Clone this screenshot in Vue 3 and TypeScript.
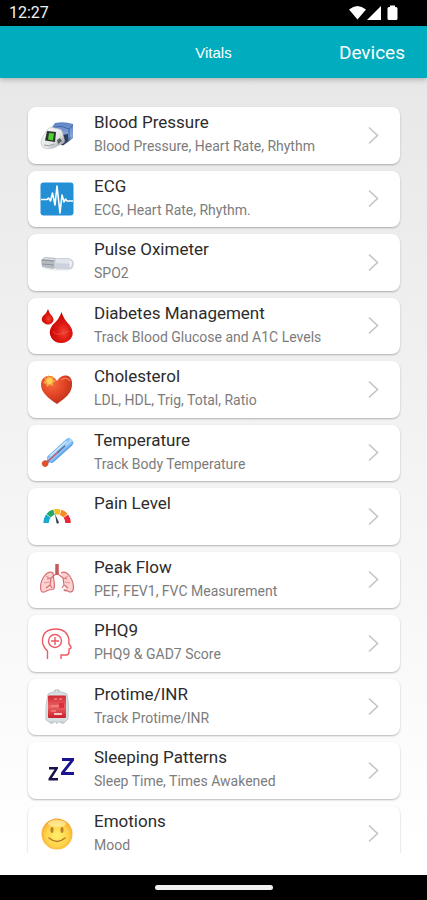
<script setup lang="ts">
interface Vital {
  icon: string
  title: string
  detail: string
}

const vitals: Vital[] = [
  { icon: 'pressure', title: 'Blood Pressure', detail: 'Blood Pressure, Heart Rate, Rhythm' },
  { icon: 'ecg', title: 'ECG', detail: 'ECG, Heart Rate, Rhythm.' },
  { icon: 'oximeter', title: 'Pulse Oximeter', detail: 'SPO2' },
  { icon: 'drops', title: 'Diabetes Management', detail: 'Track Blood Glucose and A1C Levels' },
  { icon: 'heart', title: 'Cholesterol', detail: 'LDL, HDL, Trig, Total, Ratio' },
  { icon: 'thermometer', title: 'Temperature', detail: 'Track Body Temperature' },
  { icon: 'gauge', title: 'Pain Level', detail: '' },
  { icon: 'lungs', title: 'Peak Flow', detail: 'PEF, FEV1, FVC Measurement' },
  { icon: 'head', title: 'PHQ9', detail: 'PHQ9 & GAD7 Score' },
  { icon: 'bag', title: 'Protime/INR', detail: 'Track Protime/INR' },
  { icon: 'sleep', title: 'Sleeping Patterns', detail: 'Sleep Time, Times Awakened' },
  { icon: 'smile', title: 'Emotions', detail: 'Mood' },
]
</script>

<template>
  <div class="screen">
    <div class="status">
      <span class="clock">12:27</span>
      <svg class="signals" width="50" height="16" viewBox="0 0 50 16" fill="#fff" aria-hidden="true">
        <path d="M0 4.6Q8.500-2.500 17 4.600L8.500 14.500Z" />
        <path d="M32 1V15H18Z" />
        <path d="M41 2V.5h5V2h1q1.500 0 1.500 1.500v10q0 1.500-1.500 1.500h-7q-1.500 0-1.500-1.500v-10Q38.500 2 40 2Z" />
      </svg>
    </div>

    <header class="bar">
      <h1 class="heading">Vitals</h1>
      <a class="devices" href="#devices">Devices</a>
    </header>

    <main class="body">
      <ul class="list">
        <li v-for="v in vitals" :key="v.title" class="row">
          <a class="card" href="#vital">
            <svg class="icon" width="36" height="36" viewBox="0 0 36 36" fill="none" aria-hidden="true">
              <defs>
                <linearGradient id="cuff" x1="0" y1="0" x2="0" y2="1"><stop stop-color="#5f83c4" /><stop offset=".6" stop-color="#88a6d8" /><stop offset="1" stop-color="#263858" /></linearGradient>
                <linearGradient id="shell" x1="0" y1="0" x2="1" y2="1"><stop stop-color="#fff" /><stop offset=".6" stop-color="#e3e4e6" /><stop offset="1" stop-color="#777b82" /></linearGradient>
                <radialGradient id="drop" cx=".6" cy=".65" r=".6"><stop stop-color="#f04436" /><stop offset=".5" stop-color="#de1710" /><stop offset="1" stop-color="#c50906" /></radialGradient>
                <radialGradient id="heart" cx=".35" cy=".3" r=".75"><stop stop-color="#f8683f" /><stop offset=".55" stop-color="#e04425" /><stop offset="1" stop-color="#b82e1b" /></radialGradient>
                <linearGradient id="glass" x1="0" y1="0" x2="0" y2="1"><stop stop-color="#64aef3" /><stop offset=".45" stop-color="#b4dafa" /><stop offset="1" stop-color="#4f9ce9" /></linearGradient>
                <linearGradient id="blood" x1="0" y1="0" x2="0" y2="1"><stop stop-color="#cf2935" /><stop offset=".5" stop-color="#ea6262" /><stop offset="1" stop-color="#c91e2a" /></linearGradient>
                <radialGradient id="face" cx=".5" cy=".55" r=".55"><stop stop-color="#fff06a" /><stop offset=".65" stop-color="#fed34a" /><stop offset="1" stop-color="#f7a531" /></radialGradient>
              </defs>

              <template v-if="v.icon === 'pressure'">
                <path d="M13 9l3-4q9-2 18 1v14l-5 4-5 3.500-8-3z" fill="url(#cuff)" />
                <path d="M15 9q8-2 15 2l4-4M30 11v12" stroke="#3f65aa" />
                <path d="M22 17l7-1v7l-6 4z" fill="#2e3d5c" />
                <path d="M3 20l5-8q2-3 5-2.500l7 1.500q3 .5 3.500 4l2 8q0 2-3 3l-8 4q-8 2-11-1-3-4-.5-9z" fill="url(#shell)" stroke="#c3c5c8" stroke-width=".7" />
                <path d="M8 13l9 1-1 10-10-1.500z" fill="#29342d" />
                <path d="M10 15l5 .5-1 7-5-1z" fill="#54cf35" />
                <path d="M18 22l3-2 2 3-4 3z" fill="#5b5f66" />
                <path d="M5 27q5 2 10-1" stroke="#9b9da0" />
              </template>

              <template v-else-if="v.icon === 'ecg'">
                <rect x="1.500" y="1.500" width="33" height="33" rx="3" fill="#2390d5" />
                <path d="M2 18.500h6l1.500-1.500 2 3 2-8 2.500 12 2-19 3 27 2-18 2 7 1.500-3 1.500 2H34" stroke="#fff" stroke-width="1.600" stroke-linejoin="round" />
              </template>

              <template v-else-if="v.icon === 'oximeter'">
                <path d="M2 15l4-3 11 1v10l-3 1-11-2z" fill="#b5bac0" />
                <path d="M3 15l12 1M3 19l12 1" stroke="#8d949b" />
                <path d="M5 13.500l10 1" stroke="#e6e9ec" />
                <path d="M16 13h14q5 2 5 6-1 5-4 5.500H18q-3-1-3-5t1-6.500z" fill="#ced1dc" />
                <path d="M17 14h13q3 2 3.500 5l-17-1z" fill="#e2e4ec" />
                <path d="M31 16q2 3 0 6" stroke="#f7f8fb" stroke-width="1.500" />
                <path d="M4 23l11 2h15" stroke="#e4e6ea" />
              </template>

              <template v-else-if="v.icon === 'drops'">
                <path d="M9 1q1 4 4 7 3 4 0 7-4 3-8 0-4-3-1-7 4-3 5-7z" fill="url(#drop)" />
                <path d="M22.500 4q2 7 8 13 6 8 1 14-4 4-9 4-7 0-10-5-4-6 1-13 7-6 9-13z" fill="url(#drop)" />
                <path d="M14 23q2 4 7 3t9-3" stroke="#f36c55" opacity=".5" />
              </template>

              <template v-else-if="v.icon === 'heart'">
                <path d="M18 32Q2 22 2 13C2 3 13 1 18 9c5-8 15-7 15 2 1 10-8 16-15 21z" fill="url(#heart)" />
                <path d="M22 8q6-4 9 1" stroke="#ff8b62" stroke-width="1.500" opacity=".7" />
                <path d="M9 3l2 2 3-1v3l3 2-3 2v3l-3-1-3 2-1-3-3-1 2-3-1-3 3 1z" fill="#f5a23b" />
                <circle cx="10.500" cy="9" r="3" fill="#ffce5c" />
              </template>

              <template v-else-if="v.icon === 'thermometer'">
                <g transform="rotate(-42 18 18)">
                  <rect x="6" y="14" width="32" height="8.500" rx="4" fill="url(#glass)" />
                  <path d="M1 16.500h6V20H1q-2-1.500 0-3.500z" fill="#6aaae6" />
                  <path d="M2 18h19" stroke="#b9526c" stroke-width="1.500" />
                  <path d="M19 18h10" stroke="#61749e" stroke-width="1.500" />
                  <path d="M11 15.500h22" stroke="#d9effd" stroke-width="1.200" />
                  <circle cx="2" cy="18" r="3.200" fill="#e1502e" />
                </g>
              </template>

              <g v-else-if="v.icon === 'gauge'" stroke-width="5.500">
                <path d="M7 24A11 11 0 0 1 9.300 17" stroke="#18a9cf" />
                <path d="M9.600 16.600A11 11 0 0 1 15 13.200" stroke="#22a765" />
                <path d="M15.600 13A11 11 0 0 1 21 13.200" stroke="#f7bc22" />
                <path d="M21.600 13.400A11 11 0 0 1 26.500 16.600" stroke="#f78b20" />
                <path d="M26.900 17.200A11 11 0 0 1 29 24" stroke="#ee2538" />
                <path d="M16 15l4 8.500q-1 2-2.500.500z" fill="#344452" stroke="none" />
              </g>

              <g v-else-if="v.icon === 'lungs'" stroke="#d46f73" stroke-width="1.200" stroke-linejoin="round">
                <path d="M14 11C8 7 2 17 1.500 25q0 7 5 4.500 3-2 7-2 2-.5 2-4z" fill="#fbd2d1" />
                <path d="M22 11c6-4 12 6 12.500 14 0 7-5 4.500-5 4.500-3-2-7-2-2-.5-2-4z" fill="#fbd2d1" />
                <path d="M18 2v11" stroke="#c9585d" stroke-width="3.500" />
                <path d="M17 12l-5 4-4 1m4-1-1 7-4 3m4-3 2 3M19 12l5 4 4 1m-4-1 1 7 4 3m-4-3-2 3" />
                <path d="M7 14l3 2M5 21l5-1M29 14l-3 2m5 5-5-1" stroke="#e89495" />
              </g>

              <g v-else-if="v.icon === 'head'" stroke="#ed5964" stroke-width="1.400" stroke-linejoin="round">
                <path d="M8.500 33v-8Q3 20 3.500 14C4 6 10 3 17 3c8 0 12 5 13 11 0 2-.5 3 0 4l2 3q.5 1.500-2 2v3q0 3-3 3h-5v4" />
                <circle cx="16" cy="15" r="6.500" />
                <path d="M16 11v8M12 15h8" />
              </g>

              <template v-else-if="v.icon === 'bag'">
                <path d="M16 4V1h4v3M11 32v2h3v-2M22 32v2h3v-2M18 32v3" stroke="#a9b1b5" />
                <path d="M9 5l5-2h9l5 2q2 8 1 25l-3 3H10l-3-2Q6 16 9 5z" fill="#d7dfe2" stroke="#bfc9cd" />
                <rect x="9" y="6.500" width="18" height="22.500" rx="1" fill="url(#blood)" />
                <path d="M15 10h3m2 0h3M12 17h9M12 22h5" stroke="#f7a09c" />
                <path d="M20 14h5v5h-5z" fill="#da3039" />
                <path d="M15 25h8" stroke="#fac4c1" stroke-width="2" />
              </template>

              <template v-else-if="v.icon === 'sleep'">
                <path d="M10 14h9v1.500L13 25h6v2.500H9.500v-2l6-9H10z" fill="#171349" />
                <path d="M23 5h12v2.500L26 19h9v3H22v-2.500L31 8h-8z" fill="#1a148f" />
              </template>

              <template v-else>
                <circle cx="18" cy="18" r="15.500" fill="url(#face)" />
                <ellipse cx="18" cy="7.500" rx="9" ry="3.500" fill="#fff3b0" opacity=".65" />
                <ellipse cx="13" cy="14" rx="1.500" ry="3" fill="#b9802a" />
                <ellipse cx="23" cy="14" rx="1.500" ry="3" fill="#b9802a" />
                <path d="M10 22q8 7 16 0" stroke="#b9782a" stroke-width="1.500" stroke-linecap="round" />
              </template>
            </svg>

            <span class="text">
              <span class="title">{{ v.title }}</span>
              <span v-if="v.detail" class="detail">{{ v.detail }}</span>
            </span>

            <svg class="chevron" width="12" height="20" viewBox="0 0 12 20" fill="none" aria-hidden="true">
              <path d="M2 1.500L10.500 9.500L2 17.500" stroke="#c4c4c4" stroke-width="1.600" />
            </svg>
          </a>
        </li>
      </ul>
    </main>

    <footer class="nav"><span class="handle"></span></footer>
  </div>
</template>

<style>
body {
  margin: 0;
}
</style>

<style scoped>
.screen {
  display: flex;
  flex-direction: column;
  height: 100vh;
  overflow: hidden;
  background: #fff;
  font-family: Roboto, "Liberation Sans", sans-serif;
}

.status {
  display: flex;
  flex: none;
  align-items: center;
  justify-content: space-between;
  height: 26px;
  padding: 0 28px 0 9px;
  background: #000;
  color: #f2f2f2;
}

.clock {
  font-size: 16px;
  line-height: 26px;
}

.bar {
  position: relative;
  z-index: 1;
  display: grid;
  flex: none;
  grid-template-columns: 1fr auto 1fr;
  align-items: center;
  height: 52px;
  padding: 0 22px;
  background: #00acbe;
  box-shadow: 0 1px 6px rgba(0, 0, 0, 0.3);
  color: #fff;
}

.heading {
  grid-column: 2;
  margin: 0;
  font-family: "Liberation Sans", Arial, sans-serif;
  font-size: 15px;
  font-weight: 400;
}

.devices {
  justify-self: end;
  color: inherit;
  font-size: 19px;
  text-decoration: none;
}

.body {
  flex: 1;
  min-height: 0;
  padding: 29px 27px 0 28px;
  overflow: hidden;
  border-bottom: 22px solid #fff;
  background: linear-gradient(#e8e8e8, #fff);
}

.list {
  display: grid;
  grid-auto-rows: 57px 56px;
  gap: 7px;
  margin: 0;
  padding: 0;
  list-style: none;
}

.card {
  display: flex;
  box-sizing: border-box;
  height: 100%;
  align-items: center;
  padding: 0 21px 0 11px;
  border-radius: 8px;
  background: #fff;
  box-shadow: 0 1px 2px rgba(0, 0, 0, 0.28);
  color: #2c2c2c;
  text-decoration: none;
}

.icon,
.chevron {
  flex: none;
}

.text {
  display: flex;
  flex: 1;
  flex-direction: column;
  align-self: flex-start;
  min-width: 0;
  padding: 3px 0 0 19px;
}

.title {
  font-size: 17px;
  line-height: 24px;
}

.detail {
  color: #7c7c7c;
  font-size: 14px;
  line-height: 24px;
}

.nav {
  display: flex;
  flex: none;
  align-items: center;
  justify-content: center;
  height: 25px;
  background: #000;
}

.handle {
  width: 118px;
  height: 5px;
  border-radius: 3px;
  background: #f0f0f0;
}
</style>
